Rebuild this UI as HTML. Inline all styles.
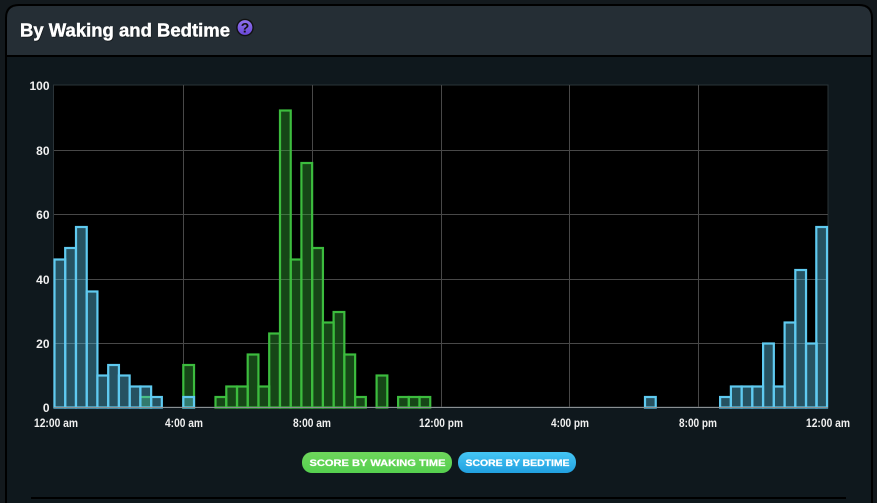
<!DOCTYPE html>
<html><head><meta charset="utf-8">
<style>
html,body{margin:0;padding:0;width:877px;height:503px;overflow:hidden;background:#13191d}
svg{display:block;position:absolute;left:0;top:0}
text{font-family:"Liberation Sans",sans-serif;font-weight:bold}
</style></head>
<body>
<svg width="877" height="503" viewBox="0 0 877 503" xmlns="http://www.w3.org/2000/svg">
<defs>
<linearGradient id="gb" x1="0" y1="0" x2="0" y2="1"><stop offset="0" stop-color="#6fd65c"/><stop offset="1" stop-color="#55d04f"/></linearGradient>
<linearGradient id="bb" x1="0" y1="0" x2="0" y2="1"><stop offset="0" stop-color="#45c6f5"/><stop offset="1" stop-color="#21a0e0"/></linearGradient>
<linearGradient id="pb" x1="0" y1="0" x2="0" y2="1"><stop offset="0" stop-color="#8f72ee"/><stop offset="1" stop-color="#6a48d8"/></linearGradient>
</defs>
<rect width="877" height="503" fill="#13191d"/>
<path d="M5 503V18Q5 4 19 4H859Q873 4 873 18V503Z" fill="#000"/>
<path d="M7 503V57H871V503Z" fill="#0f181d"/>
<path d="M7 55V18Q7 6 19 6H859Q871 6 871 18V55Z" fill="#252e35"/>
<text x="20" y="36.5" font-size="18" fill="#000" opacity=".6" textLength="210" lengthAdjust="spacingAndGlyphs" transform="translate(.7 .8)">By Waking and Bedtime</text>
<text x="20" y="36.5" font-size="18" fill="#fff" stroke="#fff" stroke-width=".45" textLength="210" lengthAdjust="spacingAndGlyphs">By Waking and Bedtime</text>
<circle cx="245" cy="27.5" r="8.8" fill="#111"/>
<circle cx="245" cy="27.5" r="7.4" fill="url(#pb)"/>
<text x="245" y="32.5" font-size="14" fill="#111" text-anchor="middle">?</text>

<rect x="54" y="85" width="774" height="322" fill="#000"/>
<rect x="53.5" y="85" width="774.5" height="322" fill="none" stroke="#2a3338" stroke-width="1"/>
<g stroke="#484848" stroke-width="1" fill="none">
<path d="M54 150.5H828M54 214.5H828M54 279.5H828M54 343.5H828"/>
<path d="M183.5 85V407M312.5 85V407M441.5 85V407M569.5 85V407M698.5 85V407"/>
</g>

<g fill="#38b03a" fill-opacity=".4" stroke="#3cbc3e" stroke-width="2.2">
<rect x="140.4" y="397" width="10.73" height="10.5"/>
<rect x="183.3" y="365" width="10.73" height="42.5"/>
<rect x="215.5" y="397" width="10.73" height="10.5"/>
<rect x="226.3" y="386.5" width="10.73" height="21"/>
<rect x="237" y="386.5" width="10.73" height="21"/>
<rect x="247.7" y="354.5" width="10.73" height="53"/>
<rect x="258.5" y="386.5" width="10.73" height="21"/>
<rect x="269.2" y="333.5" width="10.73" height="74"/>
<rect x="280" y="110.5" width="10.73" height="297"/>
<rect x="290.7" y="259.5" width="10.73" height="148"/>
<rect x="301.4" y="163" width="10.73" height="244.5"/>
<rect x="312.2" y="248" width="10.73" height="159.5"/>
<rect x="322.9" y="322.5" width="10.73" height="85"/>
<rect x="333.6" y="312" width="10.73" height="95.5"/>
<rect x="344.4" y="354.5" width="10.73" height="53"/>
<rect x="355.1" y="397" width="10.73" height="10.5"/>
<rect x="376.6" y="375.5" width="10.73" height="32"/>
<rect x="398.1" y="397" width="10.73" height="10.5"/>
<rect x="408.8" y="397" width="10.73" height="10.5"/>
<rect x="419.5" y="397" width="10.73" height="10.5"/>
</g>
<g fill="#5bc4e8" fill-opacity=".42" stroke="#5fcaf0" stroke-width="2.2">
<rect x="54.5" y="259.5" width="10.73" height="148"/>
<rect x="65.2" y="248" width="10.73" height="159.5"/>
<rect x="76" y="227" width="10.73" height="180.5"/>
<rect x="86.7" y="291.5" width="10.73" height="116"/>
<rect x="97.4" y="375.5" width="10.73" height="32"/>
<rect x="108.2" y="365" width="10.73" height="42.5"/>
<rect x="118.9" y="375.5" width="10.73" height="32"/>
<rect x="129.7" y="386.5" width="10.73" height="21"/>
<rect x="140.4" y="386.5" width="10.73" height="21"/>
<rect x="151.1" y="397" width="10.73" height="10.5"/>
<rect x="183.3" y="397" width="10.73" height="10.5"/>
<rect x="645" y="397" width="10.73" height="10.5"/>
<rect x="720.1" y="397" width="10.73" height="10.5"/>
<rect x="730.9" y="386.5" width="10.73" height="21"/>
<rect x="741.6" y="386.5" width="10.73" height="21"/>
<rect x="752.3" y="386.5" width="10.73" height="21"/>
<rect x="763.1" y="343.5" width="10.73" height="64"/>
<rect x="773.8" y="386.5" width="10.73" height="21"/>
<rect x="784.6" y="322.5" width="10.73" height="85"/>
<rect x="795.3" y="270" width="10.73" height="137.5"/>
<rect x="806" y="343.5" width="10.73" height="64"/>
<rect x="816.3" y="227" width="10.73" height="180.5"/>
</g>
<path d="M54 407.5H828" stroke="#8a8f92" stroke-width="1"/>

<g font-size="12" fill="#f0f0f0" text-anchor="end">
<text x="49.5" y="90">100</text>
<text x="49.5" y="155">80</text>
<text x="49.5" y="219">60</text>
<text x="49.5" y="284">40</text>
<text x="49.5" y="348">20</text>
<text x="49.5" y="412">0</text>
</g>
<g font-size="12" fill="#f0f0f0">
<text x="34" y="427" textLength="44" lengthAdjust="spacingAndGlyphs">12:00 am</text>
<text x="165" y="427" textLength="38" lengthAdjust="spacingAndGlyphs">4:00 am</text>
<text x="293" y="427" textLength="38" lengthAdjust="spacingAndGlyphs">8:00 am</text>
<text x="419" y="427" textLength="44" lengthAdjust="spacingAndGlyphs">12:00 pm</text>
<text x="551" y="427" textLength="38" lengthAdjust="spacingAndGlyphs">4:00 pm</text>
<text x="679" y="427" textLength="38" lengthAdjust="spacingAndGlyphs">8:00 pm</text>
<text x="806" y="427" textLength="44" lengthAdjust="spacingAndGlyphs">12:00 am</text>
</g>

<rect x="302" y="452" width="150" height="21" rx="10" fill="url(#gb)"/>
<rect x="458" y="452" width="118" height="21" rx="10" fill="url(#bb)"/>
<g font-size="9.5" fill="#fff" stroke="#fff" stroke-width=".25">
<text x="309.5" y="466" textLength="136" lengthAdjust="spacingAndGlyphs">SCORE BY WAKING TIME</text>
<text x="465.5" y="466" textLength="104" lengthAdjust="spacingAndGlyphs">SCORE BY BEDTIME</text>
</g>

<rect x="31" y="497" width="815" height="2" fill="#000"/>
</svg>
</body></html>
